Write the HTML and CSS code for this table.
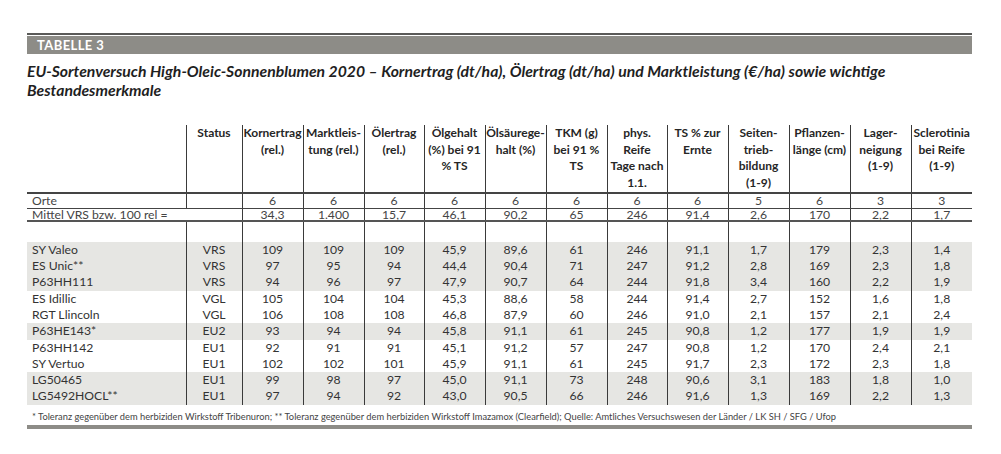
FILE: index.html
```html
<!DOCTYPE html>
<html lang="de">
<head>
<meta charset="utf-8">
<title>Tabelle 3</title>
<link rel="stylesheet" href="styles.css">
</head>
<body>
<div class="page">
  <div class="band">TABELLE 3</div>
  <h1 class="title">EU-Sortenversuch High-Oleic-Sonnenblumen 2020 – Kornertrag (dt/ha), Ölertrag (dt/ha) und Marktleistung (€/ha) sowie wichtige Bestandesmerkmale</h1>
  <table class="data">
    <colgroup>
      <col class="c-label"><col class="c-status">
      <col class="c61"><col class="c61"><col class="c60"><col class="c61"><col class="c61"><col class="c61">
      <col class="c60"><col class="c61"><col class="c61"><col class="c61"><col class="c61"><col class="c61">
    </colgroup>
    <thead>
      <tr class="head">
        <th class="lbl"></th>
        <th>Status</th>
        <th>Kornertrag<br>(rel.)</th>
        <th>Marktleis-<br>tung (rel.)</th>
        <th>Ölertrag<br>(rel.)</th>
        <th>Ölgehalt<br>(%) bei 91<br>% TS</th>
        <th>Ölsäurege-<br>halt (%)</th>
        <th>TKM (g)<br>bei 91 %<br>TS</th>
        <th>phys.<br>Reife<br>Tage nach<br>1.1.</th>
        <th>TS % zur<br>Ernte</th>
        <th>Seiten-<br>trieb-<br>bildung<br>(1-9)</th>
        <th>Pflanzen-<br>länge (cm)</th>
        <th>Lager-<br>neigung<br>(1-9)</th>
        <th>Sclerotinia<br>bei Reife<br>(1-9)</th>
      </tr>
    </thead>
    <tbody>
      <tr class="orte">
        <td class="lbl">Orte</td><td></td>
        <td>6</td><td>6</td><td>6</td><td>6</td><td>6</td><td>6</td><td>6</td><td>6</td><td>5</td><td>6</td><td>3</td><td>3</td>
      </tr>
      <tr class="mittel">
        <td class="lbl" colspan="2">Mittel VRS bzw. 100 rel =</td>
        <td>34,3</td><td>1.400</td><td>15,7</td><td>46,1</td><td>90,2</td><td>65</td><td>246</td><td>91,4</td><td>2,6</td><td>170</td><td>2,2</td><td>1,7</td>
      </tr>
      <tr class="spacer">
        <td class="lbl"></td><td></td><td></td><td></td><td></td><td></td><td></td><td></td><td></td><td></td><td></td><td></td><td></td><td></td>
      </tr>
      <tr class="row shade"><td class="lbl">SY Valeo</td><td>VRS</td><td>109</td><td>109</td><td>109</td><td>45,9</td><td>89,6</td><td>61</td><td>246</td><td>91,1</td><td>1,7</td><td>179</td><td>2,3</td><td>1,4</td></tr>
      <tr class="row shade"><td class="lbl">ES Unic**</td><td>VRS</td><td>97</td><td>95</td><td>94</td><td>44,4</td><td>90,4</td><td>71</td><td>247</td><td>91,2</td><td>2,8</td><td>169</td><td>2,3</td><td>1,8</td></tr>
      <tr class="row shade"><td class="lbl">P63HH111</td><td>VRS</td><td>94</td><td>96</td><td>97</td><td>47,9</td><td>90,7</td><td>64</td><td>244</td><td>91,8</td><td>3,4</td><td>160</td><td>2,2</td><td>1,9</td></tr>
      <tr class="row"><td class="lbl">ES Idillic</td><td>VGL</td><td>105</td><td>104</td><td>104</td><td>45,3</td><td>88,6</td><td>58</td><td>244</td><td>91,4</td><td>2,7</td><td>152</td><td>1,6</td><td>1,8</td></tr>
      <tr class="row"><td class="lbl">RGT Llincoln</td><td>VGL</td><td>106</td><td>108</td><td>108</td><td>46,8</td><td>87,9</td><td>60</td><td>246</td><td>91,0</td><td>2,1</td><td>157</td><td>2,1</td><td>2,4</td></tr>
      <tr class="row shade"><td class="lbl">P63HE143*</td><td>EU2</td><td>93</td><td>94</td><td>94</td><td>45,8</td><td>91,1</td><td>61</td><td>245</td><td>90,8</td><td>1,2</td><td>177</td><td>1,9</td><td>1,9</td></tr>
      <tr class="row"><td class="lbl">P63HH142</td><td>EU1</td><td>92</td><td>91</td><td>91</td><td>45,1</td><td>91,2</td><td>57</td><td>247</td><td>90,8</td><td>1,2</td><td>170</td><td>2,4</td><td>2,1</td></tr>
      <tr class="row"><td class="lbl">SY Vertuo</td><td>EU1</td><td>102</td><td>102</td><td>101</td><td>45,9</td><td>91,1</td><td>61</td><td>245</td><td>91,7</td><td>2,3</td><td>172</td><td>2,3</td><td>1,8</td></tr>
      <tr class="row shade"><td class="lbl">LG50465</td><td>EU1</td><td>99</td><td>98</td><td>97</td><td>45,0</td><td>91,1</td><td>73</td><td>248</td><td>90,6</td><td>3,1</td><td>183</td><td>1,8</td><td>1,0</td></tr>
      <tr class="row shade"><td class="lbl">LG5492HOCL**</td><td>EU1</td><td>97</td><td>94</td><td>92</td><td>43,0</td><td>90,5</td><td>66</td><td>246</td><td>91,6</td><td>1,3</td><td>169</td><td>2,2</td><td>1,3</td></tr>
    </tbody>
  </table>
  <p class="note">* Toleranz gegenüber dem herbiziden Wirkstoff Tribenuron; ** Toleranz gegenüber dem herbiziden Wirkstoff Imazamox (Clearfield); Quelle: Amtliches Versuchswesen der Länder / LK SH / SFG / Ufop</p>
  <div class="bottom-bar"></div>
</div>
</body>
</html>
```
FILE: styles.css
```css
html, body {
  margin: 0;
  padding: 0;
  background: #ffffff;
}

.page {
  width: 945px;
  margin-left: 27px;
  padding-top: 33px;
  font-family: Lato, "Open Sans", sans-serif;
  color: #2a2a2a;
}

.band {
  border-top: 2px solid #5a5a58;
  box-shadow: inset 0 1px 0 #ffffff;
  background: #8d8c87;
  height: 18px;
  padding-top: 1px;
  box-sizing: content-box;
  padding-left: 10px;
  color: #ffffff;
  font-weight: 700;
  font-size: 13px;
  line-height: 19px;
  letter-spacing: 0.4px;
}

.title {
  margin: 8px 0 0 0;
  font-size: 15.75px;
  line-height: 18.5px;
  font-weight: 700;
  font-style: italic;
  color: #1f1f1f;
  width: 910px;
}

.data {
  margin-top: 26px;
  width: 945px;
  border-collapse: collapse;
  table-layout: fixed;
  font-size: 12.2px;
  color: #333333;
}

.c-label { width: 159px; }
.c-status { width: 56px; }
.c61 { width: 61px; }
.c60 { width: 60px; }

.data th,
.data td {
  padding: 0;
  text-align: center;
  border-left: 1px solid #3a3a3a;
}

.data .lbl {
  border-left: none;
  text-align: left;
  padding-left: 5px;
}

.head th {
  vertical-align: top;
  font-weight: 700;
  font-size: 12px;
  line-height: 16.7px;
  color: #262626;
  padding-top: 0;
  border-bottom: 2px solid #444444;
}

.orte td {
  height: 14px;
  line-height: 14px;
  vertical-align: bottom;
  border-bottom: 1px solid #444444;
  color: #444444;
}

.mittel td {
  height: 11px;
  line-height: 11px;
  border-bottom: 2px solid #555555;
  color: #444444;
}

.spacer td {
  height: 20px;
}

.row td {
  height: 16.3px;
  line-height: 16.3px;
}

.shade td {
  background: #e6e6e3;
}

.note {
  margin: 5px 0 0 0;
  padding-left: 5px;
  font-size: 9.3px;
  line-height: 13px;
  color: #444444;
}

.bottom-bar {
  margin-top: 2px;
  height: 4px;
  background: #8d8c87;
}
```
